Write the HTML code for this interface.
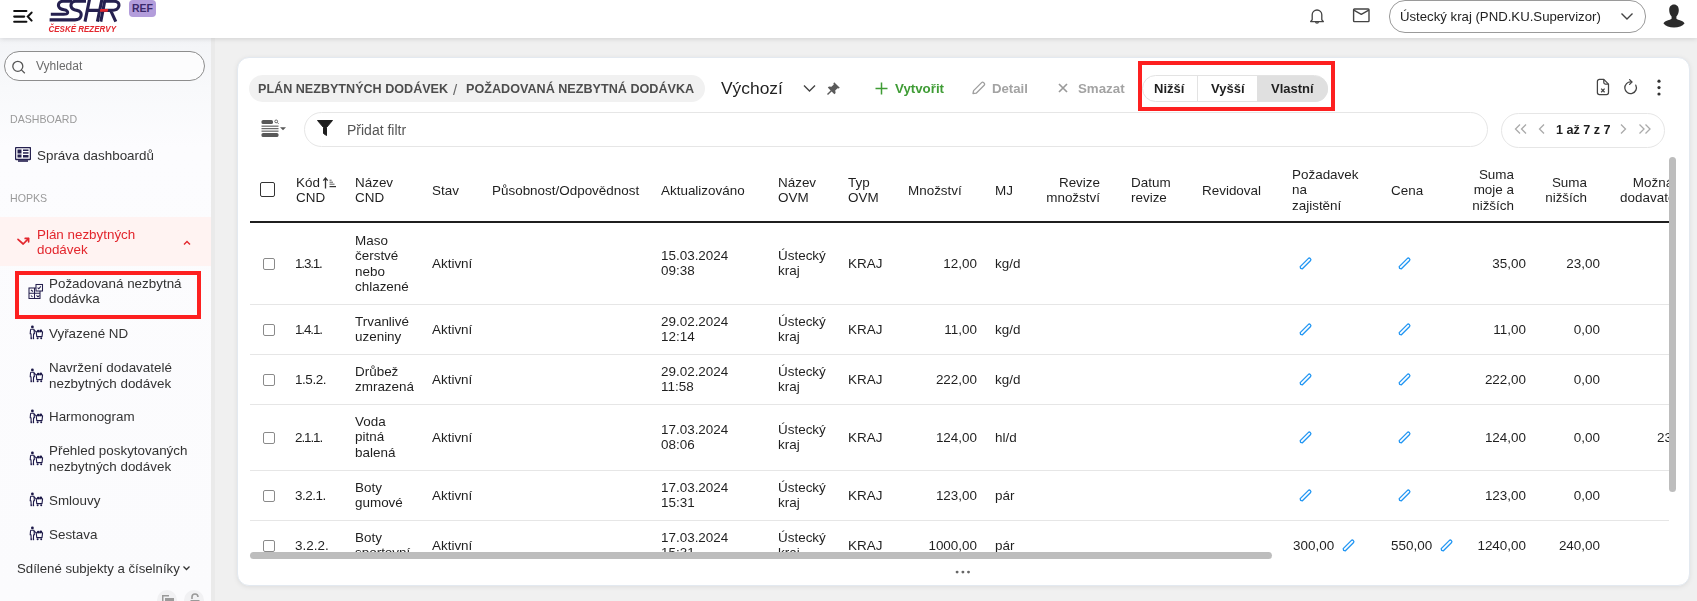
<!DOCTYPE html>
<html><head><meta charset="utf-8">
<style>
*{box-sizing:border-box;margin:0;padding:0}
html,body{width:1697px;height:601px;overflow:hidden;background:#f0f0f0;font-family:"Liberation Sans",sans-serif;color:#1f1f1f;position:relative}
.abs{position:absolute}
.t{position:absolute;white-space:nowrap;will-change:transform}
</style></head>
<body>
<div class="abs" style="left:0px;top:38px;width:211px;height:563px;background:linear-gradient(#f3f4f7 0px,#f8f9fb 50px,#fcfcfe 110px,#fbfbfd 563px);"></div>
<div class="abs" style="left:211px;top:38px;width:4px;height:563px;background:#eaeaea;"></div>
<div class="abs" style="left:236.5px;top:57px;width:1453px;height:528.5px;background:#fff;border:1px solid #e3e9f0;border-radius:12px;box-shadow:0 1px 5px rgba(0,0,0,.08);"></div>
<div class="abs" style="left:0px;top:0px;width:1697px;height:38px;background:#fff;box-shadow:0 1px 5px rgba(0,0,0,.13);z-index:3;"></div>
<svg class="abs" style="left:12px;top:8px;z-index:4;" width="22" height="16" viewBox="0 0 22 16"><g stroke="#111" stroke-width="2.1" stroke-linecap="round" fill="none"><path d="M2.2 3H14.4M2.2 8.6H12.2M2.2 13.8H14.4"/><path d="M19.6 4.6L15.8 8.6L19.6 12.6"/></g></svg>
<svg class="abs" style="left:0px;top:0px;z-index:4;" width="160" height="38" viewBox="0 0 160 38"><g fill="none" stroke="#25204f" stroke-width="3.1" stroke-linecap="butt"><path d="M72 1.3H63C59.6 1.3 58 3.6 58.6 6.1C59.2 8.6 61.6 9.4 64 9.7C66.8 10.1 68 11.6 67.5 13C67 14.2 65.8 14.3 63.5 14.3H50.8"/><path d="M86 1.3H75.5C72 1.3 70.6 3.8 71.1 6.4C71.6 9 74 10 77 10.4C80.6 10.9 81.8 13.6 80.8 16.6C80 18.9 78.2 19.9 75 19.9H49.6"/><path d="M89.8 -2L85 21.6M102.2 -2L97.4 21.6M87.8 10.4H99.8"/><path d="M105.3 -2L100.8 21.6M104.5 1.3H114C118 1.3 119.6 3.6 118.7 6.6C117.8 9.6 115.2 10.4 111.5 10.4H103.2M110.6 10.4L115.8 21.6"/></g><path d="M100.4 9H108.2L107.6 11.8H99.8z" fill="#e3262d"/><text x="48.5" y="32.3" font-family="Liberation Sans" font-weight="700" font-style="italic" font-size="9.3" fill="#e3262d" textLength="67.5" lengthAdjust="spacingAndGlyphs">ČESKÉ REZERVY</text></svg>
<div class="abs" style="left:129px;top:0px;width:27px;height:17px;z-index:4;background:#b39ddb;border-radius:4px;font:700 10.5px/17px 'Liberation Sans',sans-serif;color:#3b2a6b;text-align:center">REF</div>
<svg class="abs" style="left:1308px;top:7px;z-index:4;" width="18" height="18" viewBox="0 0 18 18"><g fill="none" stroke="#444" stroke-width="1.3" stroke-linejoin="round"><path d="M4.2 12.8V7.8a4.8 4.8 0 0 1 9.6 0v5l1.6 1.8H2.6z"/><path d="M7.6 14.8a1.4 1.4 0 0 0 2.8 0"/></g></svg>
<svg class="abs" style="left:1352px;top:7px;z-index:4;" width="19" height="17" viewBox="0 0 19 17"><g fill="none" stroke="#444" stroke-width="1.4" stroke-linejoin="round"><rect x="1.6" y="2" width="15.4" height="12.6" rx="0.8"/><path d="M1.8 3.2L9.3 7.3L16.8 3.2"/></g></svg>
<div class="abs" style="left:1389px;top:0px;width:257px;height:33px;border:1px solid #9a9a9a;border-radius:16px;z-index:4;background:#fff;"></div>
<div class="t" style="top:9.13px;font-size:13.2px;line-height:15.179999999999998px;color:#222;left:1400.00px;z-index:4;">Ústecký kraj (PND.KU.Supervizor)</div>
<svg class="abs" style="left:1619px;top:11px;z-index:4;" width="16" height="10" viewBox="0 0 16 10"><path d="M2.5 2.5L8 8L13.5 2.5" fill="none" stroke="#444" stroke-width="1.4"/></svg>
<svg class="abs" style="left:1662px;top:3px;z-index:4;" width="24" height="26" viewBox="0 0 24 26"><path fill="#2b2b2b" d="M12 1.5C9 1.5 7.2 3.8 7.2 7C7.2 9.6 8.2 12 9.6 13.4V15.6C9.4 16.4 8.6 16.6 6.8 17.1C3.8 17.9 1.8 19.2 1.5 20.5C3.6 23.4 7.4 24.4 12 24.4C16.6 24.4 20.4 23.4 22.5 20.5C22.2 19.2 20.2 17.9 17.2 17.1C15.4 16.6 14.6 16.4 14.4 15.6V13.4C15.8 12 16.8 9.6 16.8 7C16.8 3.8 15 1.5 12 1.5Z"/></svg>
<div class="abs" style="left:4px;top:51px;width:201px;height:30px;border:1px solid #8d8d8d;border-radius:15px;background:#fcfcfd;"></div>
<svg class="abs" style="left:11px;top:60px;" width="16" height="14" viewBox="0 0 16 14"><g fill="none" stroke="#555" stroke-width="1.3"><circle cx="6.8" cy="6.3" r="5"/><path d="M10.4 9.9L13.8 13.2"/></g></svg>
<div class="t" style="top:60.34px;font-size:12px;line-height:13.799999999999999px;color:#6b6b6b;left:36.00px;">Vyhledat</div>
<div class="t" style="top:113.23px;font-size:10.6px;line-height:12.19px;color:#9a9a9a;left:10.00px;">DASHBOARD</div>
<svg class="abs" style="left:15px;top:147px;" width="16" height="15" viewBox="0 0 16 15"><g fill="#25204f"><rect x="0.5" y="0.5" width="15" height="12" rx="1" fill="none" stroke="#25204f" stroke-width="1.4"/><rect x="2.5" y="2.5" width="4" height="4"/><rect x="2.5" y="7.5" width="4" height="3"/><rect x="8" y="2.5" width="5.5" height="1.5"/><rect x="8" y="5.2" width="5.5" height="1.5"/><rect x="8" y="8" width="5.5" height="2.5"/><rect x="3" y="13.2" width="10" height="1.6"/></g></svg>
<div class="t" style="top:147.85px;font-size:13.4px;line-height:15.409999999999998px;color:#333;left:37.00px;">Správa dashboardů</div>
<div class="t" style="top:192.23px;font-size:10.6px;line-height:12.19px;color:#9a9a9a;left:10.00px;">HOPKS</div>
<div class="abs" style="left:0px;top:217px;width:211px;height:49px;background:#fff3f2;"></div>
<svg class="abs" style="left:16px;top:235px;" width="14" height="12" viewBox="0 0 14 12"><g fill="none" stroke="#e3262d" stroke-width="1.7" stroke-linecap="round" stroke-linejoin="round"><path d="M2 4.4L7.2 9L12.4 3.6"/><path d="M9.2 3.4H12.6V6.8"/></g></svg>
<div class="t" style="top:226.65px;font-size:13.4px;line-height:15.409999999999998px;color:#e3262d;left:37.00px;">Plán nezbytných</div>
<div class="t" style="top:241.65px;font-size:13.4px;line-height:15.409999999999998px;color:#e3262d;left:37.00px;">dodávek</div>
<svg class="abs" style="left:182px;top:239px;" width="10" height="7" viewBox="0 0 10 7"><path d="M2 5.5L5 2.5L8 5.5" fill="none" stroke="#e3262d" stroke-width="1.4"/></svg>
<div class="abs" style="left:15px;top:270.7px;width:185.5px;height:48.6px;border:4px solid #fd2020;"></div>
<svg class="abs" style="left:27px;top:283px;" width="17" height="16" viewBox="0 0 17 16"><g fill="none" stroke="#25204f" stroke-width="1.05"><rect x="2" y="5" width="11" height="10.5"/><path d="M2 10.2H13M7.5 5V15.5"/><rect x="9" y="1.5" width="6.5" height="6.5" fill="#fcfcfe"/><path d="M10.6 4.6l1.2 1.2l2-2.4"/><path d="M4 7L6 8.5M4 12.5l1.5 1.5M9.5 12.3l1.5 1.5l1.5-1.5"/></g></svg>
<div class="t" style="top:276.25px;font-size:13.4px;line-height:15.409999999999998px;color:#333;left:49.00px;">Požadovaná nezbytná</div>
<div class="t" style="top:291.05px;font-size:13.4px;line-height:15.409999999999998px;color:#333;left:49.00px;">dodávka</div>
<svg class="abs" style="left:29px;top:325px;" width="15" height="15" viewBox="0 0 15 15"><g fill="#1c1848"><circle cx="3.4" cy="1.9" r="1.4"/></g><g fill="none" stroke="#1c1848" stroke-width="1.1" stroke-linejoin="round"><path d="M1.6 4.3H5L5.4 8.8H4.6L4.4 13.6M1.6 4.3L1.2 8.8H2L2.2 13.6"/><path d="M5 5.2L7.2 6.6"/><path d="M7.2 6.8H13.6L13 11.6H7.8Z"/></g><g fill="#1c1848"><circle cx="9.2" cy="6" r="1.3"/><circle cx="11.8" cy="5.8" r="1.4"/><circle cx="8.6" cy="13.2" r="1"/><circle cx="12.2" cy="13.2" r="1"/><rect x="1.6" y="12.6" width="1.3" height="1.6"/><rect x="3.8" y="12.6" width="1.3" height="1.6"/></g></svg>
<div class="t" style="top:326.15px;font-size:13.4px;line-height:15.409999999999998px;color:#333;left:49.00px;">Vyřazené ND</div>
<svg class="abs" style="left:29px;top:368px;" width="15" height="15" viewBox="0 0 15 15"><g fill="#1c1848"><circle cx="3.4" cy="1.9" r="1.4"/></g><g fill="none" stroke="#1c1848" stroke-width="1.1" stroke-linejoin="round"><path d="M1.6 4.3H5L5.4 8.8H4.6L4.4 13.6M1.6 4.3L1.2 8.8H2L2.2 13.6"/><path d="M5 5.2L7.2 6.6"/><path d="M7.2 6.8H13.6L13 11.6H7.8Z"/></g><g fill="#1c1848"><circle cx="9.2" cy="6" r="1.3"/><circle cx="11.8" cy="5.8" r="1.4"/><circle cx="8.6" cy="13.2" r="1"/><circle cx="12.2" cy="13.2" r="1"/><rect x="1.6" y="12.6" width="1.3" height="1.6"/><rect x="3.8" y="12.6" width="1.3" height="1.6"/></g></svg>
<div class="t" style="top:360.45px;font-size:13.4px;line-height:15.409999999999998px;color:#333;left:49.00px;">Navržení dodavatelé</div>
<div class="t" style="top:375.75px;font-size:13.4px;line-height:15.409999999999998px;color:#333;left:49.00px;">nezbytných dodávek</div>
<svg class="abs" style="left:29px;top:409px;" width="15" height="15" viewBox="0 0 15 15"><g fill="#1c1848"><circle cx="3.4" cy="1.9" r="1.4"/></g><g fill="none" stroke="#1c1848" stroke-width="1.1" stroke-linejoin="round"><path d="M1.6 4.3H5L5.4 8.8H4.6L4.4 13.6M1.6 4.3L1.2 8.8H2L2.2 13.6"/><path d="M5 5.2L7.2 6.6"/><path d="M7.2 6.8H13.6L13 11.6H7.8Z"/></g><g fill="#1c1848"><circle cx="9.2" cy="6" r="1.3"/><circle cx="11.8" cy="5.8" r="1.4"/><circle cx="8.6" cy="13.2" r="1"/><circle cx="12.2" cy="13.2" r="1"/><rect x="1.6" y="12.6" width="1.3" height="1.6"/><rect x="3.8" y="12.6" width="1.3" height="1.6"/></g></svg>
<div class="t" style="top:409.15px;font-size:13.4px;line-height:15.409999999999998px;color:#333;left:49.00px;">Harmonogram</div>
<svg class="abs" style="left:29px;top:451px;" width="15" height="15" viewBox="0 0 15 15"><g fill="#1c1848"><circle cx="3.4" cy="1.9" r="1.4"/></g><g fill="none" stroke="#1c1848" stroke-width="1.1" stroke-linejoin="round"><path d="M1.6 4.3H5L5.4 8.8H4.6L4.4 13.6M1.6 4.3L1.2 8.8H2L2.2 13.6"/><path d="M5 5.2L7.2 6.6"/><path d="M7.2 6.8H13.6L13 11.6H7.8Z"/></g><g fill="#1c1848"><circle cx="9.2" cy="6" r="1.3"/><circle cx="11.8" cy="5.8" r="1.4"/><circle cx="8.6" cy="13.2" r="1"/><circle cx="12.2" cy="13.2" r="1"/><rect x="1.6" y="12.6" width="1.3" height="1.6"/><rect x="3.8" y="12.6" width="1.3" height="1.6"/></g></svg>
<div class="t" style="top:443.45px;font-size:13.4px;line-height:15.409999999999998px;color:#333;left:49.00px;">Přehled poskytovaných</div>
<div class="t" style="top:458.95px;font-size:13.4px;line-height:15.409999999999998px;color:#333;left:49.00px;">nezbytných dodávek</div>
<svg class="abs" style="left:29px;top:492px;" width="15" height="15" viewBox="0 0 15 15"><g fill="#1c1848"><circle cx="3.4" cy="1.9" r="1.4"/></g><g fill="none" stroke="#1c1848" stroke-width="1.1" stroke-linejoin="round"><path d="M1.6 4.3H5L5.4 8.8H4.6L4.4 13.6M1.6 4.3L1.2 8.8H2L2.2 13.6"/><path d="M5 5.2L7.2 6.6"/><path d="M7.2 6.8H13.6L13 11.6H7.8Z"/></g><g fill="#1c1848"><circle cx="9.2" cy="6" r="1.3"/><circle cx="11.8" cy="5.8" r="1.4"/><circle cx="8.6" cy="13.2" r="1"/><circle cx="12.2" cy="13.2" r="1"/><rect x="1.6" y="12.6" width="1.3" height="1.6"/><rect x="3.8" y="12.6" width="1.3" height="1.6"/></g></svg>
<div class="t" style="top:492.95px;font-size:13.4px;line-height:15.409999999999998px;color:#333;left:49.00px;">Smlouvy</div>
<svg class="abs" style="left:29px;top:526px;" width="15" height="15" viewBox="0 0 15 15"><g fill="#1c1848"><circle cx="3.4" cy="1.9" r="1.4"/></g><g fill="none" stroke="#1c1848" stroke-width="1.1" stroke-linejoin="round"><path d="M1.6 4.3H5L5.4 8.8H4.6L4.4 13.6M1.6 4.3L1.2 8.8H2L2.2 13.6"/><path d="M5 5.2L7.2 6.6"/><path d="M7.2 6.8H13.6L13 11.6H7.8Z"/></g><g fill="#1c1848"><circle cx="9.2" cy="6" r="1.3"/><circle cx="11.8" cy="5.8" r="1.4"/><circle cx="8.6" cy="13.2" r="1"/><circle cx="12.2" cy="13.2" r="1"/><rect x="1.6" y="12.6" width="1.3" height="1.6"/><rect x="3.8" y="12.6" width="1.3" height="1.6"/></g></svg>
<div class="t" style="top:526.95px;font-size:13.4px;line-height:15.409999999999998px;color:#333;left:49.00px;">Sestava</div>
<div class="t" style="top:560.83px;font-size:13.2px;line-height:15.179999999999998px;color:#333;left:16.50px;">Sdílené subjekty a číselníky</div>
<svg class="abs" style="left:182px;top:565px;" width="9" height="6" viewBox="0 0 9 6"><path d="M1.5 1.5L4.5 4.5L7.5 1.5" fill="none" stroke="#333" stroke-width="1.3"/></svg>
<div class="abs" style="left:157px;top:590px;width:20px;height:20px;border-radius:10px;background:#f1f1f3;"></div>
<div class="abs" style="left:184px;top:590px;width:20px;height:20px;border-radius:10px;background:#f1f1f3;"></div>
<svg class="abs" style="left:161px;top:593.5px;" width="14" height="9" viewBox="0 0 14 9"><g fill="#9a9a9a"><path d="M1 1h7v1.5H2.5V9H1z"/><rect x="4" y="4" width="9" height="6"/></g></svg>
<svg class="abs" style="left:188px;top:593px;" width="14" height="11" viewBox="0 0 14 11"><g fill="none" stroke="#9a9a9a" stroke-width="1.6"><path d="M4 6V4a3 3 0 0 1 6 0"/></g><rect x="2.5" y="7" width="9" height="5" fill="#9a9a9a"/></svg>
<div class="abs" style="left:249px;top:75px;width:456px;height:27px;background:#f1f1f1;border-radius:13.5px;"></div>
<div class="t" style="top:82.01px;font-size:12.58px;line-height:14.466999999999999px;color:#4d4d4d;font-weight:700;left:258.30px;">PLÁN NEZBYTNÝCH DODÁVEK</div>
<div class="t" style="top:80.67px;font-size:15px;line-height:17.25px;color:#666;left:453.00px;">/</div>
<div class="t" style="top:81.97px;font-size:12.62px;line-height:14.512999999999998px;color:#4d4d4d;font-weight:700;left:465.50px;">POŽADOVANÁ NEZBYTNÁ DODÁVKA</div>
<div class="t" style="top:78.46px;font-size:17.4px;line-height:20.009999999999998px;color:#222;left:721.00px;">Výchozí</div>
<svg class="abs" style="left:802px;top:82px;" width="15" height="12" viewBox="0 0 15 12"><path d="M2 3.5L7.5 9L13 3.5" fill="none" stroke="#444" stroke-width="1.4"/></svg>
<svg class="abs" style="left:826px;top:81px;" width="15" height="15" viewBox="0 0 15 15"><g fill="#5a5a5a"><path d="M8.2 1.2L13.8 6.8L12.6 7.6L11.6 7.2L9.2 9.6L9.6 12L8.4 13.2L5.6 10.4L2 14L1 13L4.6 9.4L1.8 6.6L3 5.4L5.4 5.8L7.8 3.4L7.4 2.4z"/></g></svg>
<svg class="abs" style="left:874px;top:81px;" width="15" height="15" viewBox="0 0 15 15"><path d="M7.5 1.5V13.5M1.5 7.5H13.5" stroke="#3f9c35" stroke-width="1.5"/></svg>
<div class="t" style="top:81.04px;font-size:13.3px;line-height:15.295px;color:#3f9c35;font-weight:700;left:895.40px;">Vytvořit</div>
<svg class="abs" style="left:970px;top:80px;" width="17" height="16" viewBox="0 0 17 16"><path d="M3 13.5L3.6 10.6L11.6 2.6a1.4 1.4 0 0 1 2 0l0.6 0.6a1.4 1.4 0 0 1 0 2L6.2 13.2z" fill="none" stroke="#9e9e9e" stroke-width="1.3" stroke-linejoin="round"/></svg>
<div class="t" style="top:80.73px;font-size:13.2px;line-height:15.179999999999998px;color:#a3a3a3;font-weight:700;left:992.00px;">Detail</div>
<svg class="abs" style="left:1056px;top:81px;" width="14" height="14" viewBox="0 0 14 14"><path d="M3 3L11 11M11 3L3 11" stroke="#9a9a9a" stroke-width="1.7"/></svg>
<div class="t" style="top:80.64px;font-size:13.3px;line-height:15.295px;color:#a3a3a3;font-weight:700;left:1078.00px;">Smazat</div>
<div class="abs" style="left:1138px;top:61px;width:197px;height:50px;border:4px solid #fd2020;"></div>
<div class="abs" style="left:1141.5px;top:75px;width:186.5px;height:27px;border:1px solid #e3e3e3;border-radius:13.5px;background:#fff;overflow:hidden;"></div>
<div class="abs" style="left:1257px;top:75.5px;width:70.5px;height:26px;background:#e0e0e0;border-radius:0 13px 13px 0;"></div>
<div class="abs" style="left:1196.5px;top:76px;width:1px;height:25px;background:#e3e3e3;"></div>
<div class="t" style="top:81.62px;font-size:13px;line-height:14.95px;color:#1f1f1f;font-weight:700;left:1154.00px;">Nižší</div>
<div class="t" style="top:81.62px;font-size:13px;line-height:14.95px;color:#1f1f1f;font-weight:700;left:1210.70px;">Vyšší</div>
<div class="t" style="top:81.62px;font-size:13px;line-height:14.95px;color:#1f1f1f;font-weight:700;left:1271.00px;">Vlastní</div>
<svg class="abs" style="left:1595px;top:78px;" width="16" height="19" viewBox="0 0 16 19"><g fill="none" stroke="#444" stroke-width="1.25" stroke-linejoin="round"><path d="M4.4 1.4H8.8L13.5 6.1V14.6A2 2 0 0 1 11.5 16.6H4.4A2 2 0 0 1 2.4 14.6V3.4A2 2 0 0 1 4.4 1.4z"/><path d="M8.8 1.4V4.6A1.5 1.5 0 0 0 10.3 6.1H13.5"/><path d="M6.2 10.6L9.6 14.2M9.6 10.6L6.2 14.2"/></g></svg>
<svg class="abs" style="left:1622px;top:78px;" width="18" height="19" viewBox="0 0 18 19"><g fill="none" stroke="#444" stroke-width="1.3" stroke-linecap="round"><path d="M13.8 7.2A5.8 5.8 0 1 1 9.2 4"/><path d="M7.6 1.6L10 4L7.6 6.4"/></g></svg>
<svg class="abs" style="left:1654.8px;top:78px;" width="8" height="19" viewBox="0 0 8 19"><g fill="#333"><circle cx="4" cy="3.2" r="1.6"/><circle cx="4" cy="9.6" r="1.6"/><circle cx="4" cy="16" r="1.6"/></g></svg>
<svg class="abs" style="left:259px;top:117px;" width="30" height="22" viewBox="0 0 30 22"><g fill="#585858"><rect x="2.5" y="3" width="11.5" height="4" rx="1.6"/><rect x="2.5" y="8.6" width="17" height="1.1"/><rect x="2.5" y="11.1" width="17" height="1.1"/><rect x="2.5" y="13.6" width="17" height="1.1"/><rect x="2.5" y="16" width="17" height="4" rx="1.6"/><path d="M21 10.3H27L24 13.3z"/></g><g fill="none" stroke="#585858" stroke-width="0.9"><circle cx="17.2" cy="4.4" r="1.4"/><path d="M18.2 5.4L19.6 6.8"/></g></svg>
<div class="abs" style="left:304px;top:112px;width:1184px;height:35px;border:1px solid #e6e6e6;border-radius:17.5px;"></div>
<svg class="abs" style="left:316px;top:119px;" width="18" height="18" viewBox="0 0 18 18"><path d="M1.5 1.5H16.5L10.5 8.5V16.5L7.5 14.5V8.5z" fill="#1f1f1f" stroke="#1f1f1f" stroke-width="1" stroke-linejoin="round"/></svg>
<div class="t" style="top:122.00px;font-size:14px;line-height:16.099999999999998px;color:#555;left:346.70px;">Přidat filtr</div>
<div class="abs" style="left:1501px;top:112.5px;width:164px;height:35px;border:1px solid #e6e6e6;border-radius:17.5px;"></div>
<svg class="abs" style="left:1512px;top:122px;" width="18" height="14" viewBox="0 0 18 14"><g fill="none" stroke="#aaa" stroke-width="1.3"><path d="M8 2.5L3.5 7L8 11.5M14 2.5L9.5 7L14 11.5"/></g></svg>
<svg class="abs" style="left:1535px;top:122px;" width="12" height="14" viewBox="0 0 12 14"><path d="M9 2.5L4.5 7L9 11.5" fill="none" stroke="#aaa" stroke-width="1.3"/></svg>
<div class="t" style="top:123.09px;font-size:12.6px;line-height:14.489999999999998px;color:#1f1f1f;font-weight:700;left:1555.50px;">1 až 7 z 7</div>
<svg class="abs" style="left:1618px;top:122px;" width="12" height="14" viewBox="0 0 12 14"><path d="M3 2.5L7.5 7L3 11.5" fill="none" stroke="#aaa" stroke-width="1.3"/></svg>
<svg class="abs" style="left:1636px;top:122px;" width="18" height="14" viewBox="0 0 18 14"><g fill="none" stroke="#aaa" stroke-width="1.3"><path d="M3.5 2.5L8 7L3.5 11.5M9.5 2.5L14 7L9.5 11.5"/></g></svg>
<div class="abs" style="left:260px;top:182px;width:15px;height:15px;border:1.7px solid #333;border-radius:2px;"></div>
<div class="t" style="top:174.70px;font-size:13.45px;line-height:15.3px;color:#1f1f1f;left:295.80px;">Kód<br>CND</div>
<svg class="abs" style="left:322px;top:176px;" width="16" height="14" viewBox="0 0 16 14"><g stroke="#333" fill="none"><path d="M3.5 2.2V12.6M1.3 4.6L3.5 2.1L5.7 4.6" stroke-width="1.3"/><path d="M7.5 4.2H9.6M7.5 6.2H11M7.5 8.2H12.5" stroke-width="0.8"/><path d="M7.5 10.6H14" stroke-width="1.2"/></g></svg>
<div class="t" style="top:174.70px;font-size:13.45px;line-height:15.3px;color:#1f1f1f;left:354.60px;">Název<br>CND</div>
<div class="t" style="top:182.95px;font-size:13.45px;line-height:15.3px;color:#1f1f1f;left:432.30px;">Stav</div>
<div class="t" style="top:182.95px;font-size:13.45px;line-height:15.3px;color:#1f1f1f;left:491.70px;">Působnost/Odpovědnost</div>
<div class="t" style="top:182.95px;font-size:13.45px;line-height:15.3px;color:#1f1f1f;left:660.60px;">Aktualizováno</div>
<div class="t" style="top:174.70px;font-size:13.45px;line-height:15.3px;color:#1f1f1f;left:777.80px;">Název<br>OVM</div>
<div class="t" style="top:174.70px;font-size:13.45px;line-height:15.3px;color:#1f1f1f;left:847.90px;">Typ<br>OVM</div>
<div class="t" style="top:182.95px;font-size:13.45px;line-height:15.3px;color:#1f1f1f;left:908.30px;">Množství</div>
<div class="t" style="top:182.95px;font-size:13.45px;line-height:15.3px;color:#1f1f1f;left:994.90px;">MJ</div>
<div class="t" style="top:174.70px;font-size:13.45px;line-height:15.3px;color:#1f1f1f;left:500.40px;width:600px;text-align:right;">Revize<br>množství</div>
<div class="t" style="top:174.70px;font-size:13.45px;line-height:15.3px;color:#1f1f1f;left:1130.80px;">Datum<br>revize</div>
<div class="t" style="top:182.95px;font-size:13.45px;line-height:15.3px;color:#1f1f1f;left:1202.30px;">Revidoval</div>
<div class="t" style="top:167.05px;font-size:13.45px;line-height:15.3px;color:#1f1f1f;left:1292.30px;">Požadavek<br>na<br>zajistění</div>
<div class="t" style="top:182.95px;font-size:13.45px;line-height:15.3px;color:#1f1f1f;left:1391.00px;">Cena</div>
<div class="t" style="top:167.05px;font-size:13.45px;line-height:15.3px;color:#1f1f1f;left:914.00px;width:600px;text-align:right;">Suma<br>moje a<br>nižších</div>
<div class="t" style="top:174.70px;font-size:13.45px;line-height:15.3px;color:#1f1f1f;left:987.10px;width:600px;text-align:right;">Suma<br>nižších</div>
<div class="abs" style="left:1600px;top:150px;width:69px;height:70px;overflow:hidden">
<div class="t" style="top:24.70px;font-size:13.45px;line-height:15.3px;color:#1f1f1f;left:-247.50px;width:600px;text-align:center;">Možná<br>dodavatelé</div>
</div>
<div class="abs" style="left:250px;top:221px;width:1419px;height:2px;background:#1f1f1f;"></div>
<div class="abs" style="left:0;top:0;width:1669px;height:552px;overflow:hidden">
<div class="abs" style="left:263px;top:257.8px;width:12px;height:12px;border:1px solid #8a8a8a;border-radius:2px;"></div>
<div class="t" style="top:256.15px;font-size:13.45px;line-height:15.3px;color:#1f1f1f;left:295.10px;letter-spacing:-1.16px;">1.3.1.</div>
<div class="t" style="top:232.60px;font-size:13.45px;line-height:15.3px;color:#1f1f1f;left:354.60px;">Maso<br>čerstvé<br>nebo<br>chlazené</div>
<div class="t" style="top:256.15px;font-size:13.45px;line-height:15.3px;color:#1f1f1f;left:432.30px;">Aktivní</div>
<div class="t" style="top:247.90px;font-size:13.45px;line-height:15.3px;color:#1f1f1f;left:660.60px;">15.03.2024<br>09:38</div>
<div class="t" style="top:247.90px;font-size:13.45px;line-height:15.3px;color:#1f1f1f;left:777.80px;">Ústecký<br>kraj</div>
<div class="t" style="top:256.15px;font-size:13.45px;line-height:15.3px;color:#1f1f1f;left:847.90px;">KRAJ</div>
<div class="t" style="top:256.15px;font-size:13.45px;line-height:15.3px;color:#1f1f1f;left:377.30px;width:600px;text-align:right;">12,00</div>
<div class="t" style="top:256.15px;font-size:13.45px;line-height:15.3px;color:#1f1f1f;left:994.90px;">kg/d</div>
<svg class="abs" style="left:1298px;top:256.3px;" width="15" height="15" viewBox="0 0 15 15"><path d="M2.6 12.4L2.2 10.6L10.2 2.6a1.5 1.5 0 0 1 2.2 2.2L4.4 12.8z" fill="none" stroke="#2196f3" stroke-width="1.3" stroke-linejoin="round"/></svg>
<svg class="abs" style="left:1397px;top:256.3px;" width="15" height="15" viewBox="0 0 15 15"><path d="M2.6 12.4L2.2 10.6L10.2 2.6a1.5 1.5 0 0 1 2.2 2.2L4.4 12.8z" fill="none" stroke="#2196f3" stroke-width="1.3" stroke-linejoin="round"/></svg>
<div class="t" style="top:256.15px;font-size:13.45px;line-height:15.3px;color:#1f1f1f;left:926.40px;width:600px;text-align:right;">35,00</div>
<div class="t" style="top:256.15px;font-size:13.45px;line-height:15.3px;color:#1f1f1f;left:999.60px;width:600px;text-align:right;">23,00</div>
<div class="abs" style="left:250px;top:303.5px;width:1419px;height:1px;background:#e6e6e6;"></div>
<div class="abs" style="left:263px;top:323.8px;width:12px;height:12px;border:1px solid #8a8a8a;border-radius:2px;"></div>
<div class="t" style="top:322.15px;font-size:13.45px;line-height:15.3px;color:#1f1f1f;left:295.10px;letter-spacing:-1.12px;">1.4.1.</div>
<div class="t" style="top:313.90px;font-size:13.45px;line-height:15.3px;color:#1f1f1f;left:354.60px;">Trvanlivé<br>uzeniny</div>
<div class="t" style="top:322.15px;font-size:13.45px;line-height:15.3px;color:#1f1f1f;left:432.30px;">Aktivní</div>
<div class="t" style="top:313.90px;font-size:13.45px;line-height:15.3px;color:#1f1f1f;left:660.60px;">29.02.2024<br>12:14</div>
<div class="t" style="top:313.90px;font-size:13.45px;line-height:15.3px;color:#1f1f1f;left:777.80px;">Ústecký<br>kraj</div>
<div class="t" style="top:322.15px;font-size:13.45px;line-height:15.3px;color:#1f1f1f;left:847.90px;">KRAJ</div>
<div class="t" style="top:322.15px;font-size:13.45px;line-height:15.3px;color:#1f1f1f;left:377.30px;width:600px;text-align:right;">11,00</div>
<div class="t" style="top:322.15px;font-size:13.45px;line-height:15.3px;color:#1f1f1f;left:994.90px;">kg/d</div>
<svg class="abs" style="left:1298px;top:322.3px;" width="15" height="15" viewBox="0 0 15 15"><path d="M2.6 12.4L2.2 10.6L10.2 2.6a1.5 1.5 0 0 1 2.2 2.2L4.4 12.8z" fill="none" stroke="#2196f3" stroke-width="1.3" stroke-linejoin="round"/></svg>
<svg class="abs" style="left:1397px;top:322.3px;" width="15" height="15" viewBox="0 0 15 15"><path d="M2.6 12.4L2.2 10.6L10.2 2.6a1.5 1.5 0 0 1 2.2 2.2L4.4 12.8z" fill="none" stroke="#2196f3" stroke-width="1.3" stroke-linejoin="round"/></svg>
<div class="t" style="top:322.15px;font-size:13.45px;line-height:15.3px;color:#1f1f1f;left:926.40px;width:600px;text-align:right;">11,00</div>
<div class="t" style="top:322.15px;font-size:13.45px;line-height:15.3px;color:#1f1f1f;left:999.60px;width:600px;text-align:right;">0,00</div>
<div class="abs" style="left:250px;top:353.5px;width:1419px;height:1px;background:#e6e6e6;"></div>
<div class="abs" style="left:263px;top:373.8px;width:12px;height:12px;border:1px solid #8a8a8a;border-radius:2px;"></div>
<div class="t" style="top:372.15px;font-size:13.45px;line-height:15.3px;color:#1f1f1f;left:295.10px;letter-spacing:-0.42px;">1.5.2.</div>
<div class="t" style="top:363.90px;font-size:13.45px;line-height:15.3px;color:#1f1f1f;left:354.60px;">Drůbež<br>zmrazená</div>
<div class="t" style="top:372.15px;font-size:13.45px;line-height:15.3px;color:#1f1f1f;left:432.30px;">Aktivní</div>
<div class="t" style="top:363.90px;font-size:13.45px;line-height:15.3px;color:#1f1f1f;left:660.60px;">29.02.2024<br>11:58</div>
<div class="t" style="top:363.90px;font-size:13.45px;line-height:15.3px;color:#1f1f1f;left:777.80px;">Ústecký<br>kraj</div>
<div class="t" style="top:372.15px;font-size:13.45px;line-height:15.3px;color:#1f1f1f;left:847.90px;">KRAJ</div>
<div class="t" style="top:372.15px;font-size:13.45px;line-height:15.3px;color:#1f1f1f;left:377.30px;width:600px;text-align:right;">222,00</div>
<div class="t" style="top:372.15px;font-size:13.45px;line-height:15.3px;color:#1f1f1f;left:994.90px;">kg/d</div>
<svg class="abs" style="left:1298px;top:372.3px;" width="15" height="15" viewBox="0 0 15 15"><path d="M2.6 12.4L2.2 10.6L10.2 2.6a1.5 1.5 0 0 1 2.2 2.2L4.4 12.8z" fill="none" stroke="#2196f3" stroke-width="1.3" stroke-linejoin="round"/></svg>
<svg class="abs" style="left:1397px;top:372.3px;" width="15" height="15" viewBox="0 0 15 15"><path d="M2.6 12.4L2.2 10.6L10.2 2.6a1.5 1.5 0 0 1 2.2 2.2L4.4 12.8z" fill="none" stroke="#2196f3" stroke-width="1.3" stroke-linejoin="round"/></svg>
<div class="t" style="top:372.15px;font-size:13.45px;line-height:15.3px;color:#1f1f1f;left:926.40px;width:600px;text-align:right;">222,00</div>
<div class="t" style="top:372.15px;font-size:13.45px;line-height:15.3px;color:#1f1f1f;left:999.60px;width:600px;text-align:right;">0,00</div>
<div class="abs" style="left:250px;top:403.5px;width:1419px;height:1px;background:#e6e6e6;"></div>
<div class="abs" style="left:263px;top:431.8px;width:12px;height:12px;border:1px solid #8a8a8a;border-radius:2px;"></div>
<div class="t" style="top:430.15px;font-size:13.45px;line-height:15.3px;color:#1f1f1f;left:295.10px;letter-spacing:-1.08px;">2.1.1.</div>
<div class="t" style="top:414.25px;font-size:13.45px;line-height:15.3px;color:#1f1f1f;left:354.60px;">Voda<br>pitná<br>balená</div>
<div class="t" style="top:430.15px;font-size:13.45px;line-height:15.3px;color:#1f1f1f;left:432.30px;">Aktivní</div>
<div class="t" style="top:421.90px;font-size:13.45px;line-height:15.3px;color:#1f1f1f;left:660.60px;">17.03.2024<br>08:06</div>
<div class="t" style="top:421.90px;font-size:13.45px;line-height:15.3px;color:#1f1f1f;left:777.80px;">Ústecký<br>kraj</div>
<div class="t" style="top:430.15px;font-size:13.45px;line-height:15.3px;color:#1f1f1f;left:847.90px;">KRAJ</div>
<div class="t" style="top:430.15px;font-size:13.45px;line-height:15.3px;color:#1f1f1f;left:377.30px;width:600px;text-align:right;">124,00</div>
<div class="t" style="top:430.15px;font-size:13.45px;line-height:15.3px;color:#1f1f1f;left:994.90px;">hl/d</div>
<svg class="abs" style="left:1298px;top:430.3px;" width="15" height="15" viewBox="0 0 15 15"><path d="M2.6 12.4L2.2 10.6L10.2 2.6a1.5 1.5 0 0 1 2.2 2.2L4.4 12.8z" fill="none" stroke="#2196f3" stroke-width="1.3" stroke-linejoin="round"/></svg>
<svg class="abs" style="left:1397px;top:430.3px;" width="15" height="15" viewBox="0 0 15 15"><path d="M2.6 12.4L2.2 10.6L10.2 2.6a1.5 1.5 0 0 1 2.2 2.2L4.4 12.8z" fill="none" stroke="#2196f3" stroke-width="1.3" stroke-linejoin="round"/></svg>
<div class="t" style="top:430.15px;font-size:13.45px;line-height:15.3px;color:#1f1f1f;left:926.40px;width:600px;text-align:right;">124,00</div>
<div class="t" style="top:430.15px;font-size:13.45px;line-height:15.3px;color:#1f1f1f;left:999.60px;width:600px;text-align:right;">0,00</div>
<div class="t" style="top:430.15px;font-size:13.45px;line-height:15.3px;color:#1f1f1f;left:1656.70px;">23</div>
<div class="abs" style="left:250px;top:469.5px;width:1419px;height:1px;background:#e6e6e6;"></div>
<div class="abs" style="left:263px;top:489.8px;width:12px;height:12px;border:1px solid #8a8a8a;border-radius:2px;"></div>
<div class="t" style="top:488.15px;font-size:13.45px;line-height:15.3px;color:#1f1f1f;left:295.10px;letter-spacing:-0.48px;">3.2.1.</div>
<div class="t" style="top:479.90px;font-size:13.45px;line-height:15.3px;color:#1f1f1f;left:354.60px;">Boty<br>gumové</div>
<div class="t" style="top:488.15px;font-size:13.45px;line-height:15.3px;color:#1f1f1f;left:432.30px;">Aktivní</div>
<div class="t" style="top:479.90px;font-size:13.45px;line-height:15.3px;color:#1f1f1f;left:660.60px;">17.03.2024<br>15:31</div>
<div class="t" style="top:479.90px;font-size:13.45px;line-height:15.3px;color:#1f1f1f;left:777.80px;">Ústecký<br>kraj</div>
<div class="t" style="top:488.15px;font-size:13.45px;line-height:15.3px;color:#1f1f1f;left:847.90px;">KRAJ</div>
<div class="t" style="top:488.15px;font-size:13.45px;line-height:15.3px;color:#1f1f1f;left:377.30px;width:600px;text-align:right;">123,00</div>
<div class="t" style="top:488.15px;font-size:13.45px;line-height:15.3px;color:#1f1f1f;left:994.90px;">pár</div>
<svg class="abs" style="left:1298px;top:488.3px;" width="15" height="15" viewBox="0 0 15 15"><path d="M2.6 12.4L2.2 10.6L10.2 2.6a1.5 1.5 0 0 1 2.2 2.2L4.4 12.8z" fill="none" stroke="#2196f3" stroke-width="1.3" stroke-linejoin="round"/></svg>
<svg class="abs" style="left:1397px;top:488.3px;" width="15" height="15" viewBox="0 0 15 15"><path d="M2.6 12.4L2.2 10.6L10.2 2.6a1.5 1.5 0 0 1 2.2 2.2L4.4 12.8z" fill="none" stroke="#2196f3" stroke-width="1.3" stroke-linejoin="round"/></svg>
<div class="t" style="top:488.15px;font-size:13.45px;line-height:15.3px;color:#1f1f1f;left:926.40px;width:600px;text-align:right;">123,00</div>
<div class="t" style="top:488.15px;font-size:13.45px;line-height:15.3px;color:#1f1f1f;left:999.60px;width:600px;text-align:right;">0,00</div>
<div class="abs" style="left:250px;top:519.5px;width:1419px;height:1px;background:#e6e6e6;"></div>
<div class="abs" style="left:263px;top:539.8px;width:12px;height:12px;border:1px solid #8a8a8a;border-radius:2px;"></div>
<div class="t" style="top:538.15px;font-size:13.45px;line-height:15.3px;color:#1f1f1f;left:295.10px;letter-spacing:0px;">3.2.2.</div>
<div class="t" style="top:529.90px;font-size:13.45px;line-height:15.3px;color:#1f1f1f;left:354.60px;">Boty<br>sportovní</div>
<div class="t" style="top:538.15px;font-size:13.45px;line-height:15.3px;color:#1f1f1f;left:432.30px;">Aktivní</div>
<div class="t" style="top:529.90px;font-size:13.45px;line-height:15.3px;color:#1f1f1f;left:660.60px;">17.03.2024<br>15:31</div>
<div class="t" style="top:529.90px;font-size:13.45px;line-height:15.3px;color:#1f1f1f;left:777.80px;">Ústecký<br>kraj</div>
<div class="t" style="top:538.15px;font-size:13.45px;line-height:15.3px;color:#1f1f1f;left:847.90px;">KRAJ</div>
<div class="t" style="top:538.15px;font-size:13.45px;line-height:15.3px;color:#1f1f1f;left:377.30px;width:600px;text-align:right;">1000,00</div>
<div class="t" style="top:538.15px;font-size:13.45px;line-height:15.3px;color:#1f1f1f;left:994.90px;">pár</div>
<div class="t" style="top:538.15px;font-size:13.45px;line-height:15.3px;color:#1f1f1f;left:1292.90px;">300,00</div>
<svg class="abs" style="left:1341px;top:537.8px;" width="15" height="15" viewBox="0 0 15 15"><path d="M2.6 12.4L2.2 10.6L10.2 2.6a1.5 1.5 0 0 1 2.2 2.2L4.4 12.8z" fill="none" stroke="#2196f3" stroke-width="1.3" stroke-linejoin="round"/></svg>
<div class="t" style="top:538.15px;font-size:13.45px;line-height:15.3px;color:#1f1f1f;left:1390.80px;">550,00</div>
<svg class="abs" style="left:1439px;top:537.8px;" width="15" height="15" viewBox="0 0 15 15"><path d="M2.6 12.4L2.2 10.6L10.2 2.6a1.5 1.5 0 0 1 2.2 2.2L4.4 12.8z" fill="none" stroke="#2196f3" stroke-width="1.3" stroke-linejoin="round"/></svg>
<div class="t" style="top:538.15px;font-size:13.45px;line-height:15.3px;color:#1f1f1f;left:926.40px;width:600px;text-align:right;">1240,00</div>
<div class="t" style="top:538.15px;font-size:13.45px;line-height:15.3px;color:#1f1f1f;left:999.60px;width:600px;text-align:right;">240,00</div>
</div>
<div class="abs" style="left:1669px;top:156.5px;width:7px;height:335px;background:#bdbdbd;border-radius:3.5px;"></div>
<div class="abs" style="left:250px;top:551.5px;width:1022px;height:7px;background:#bdbdbd;border-radius:3.5px;"></div>
<svg class="abs" style="left:953px;top:569px;" width="20" height="6" viewBox="0 0 20 6"><g fill="#666"><circle cx="4.1" cy="3.1" r="1.45"/><circle cx="9.9" cy="3.1" r="1.45"/><circle cx="15.5" cy="3.1" r="1.45"/></g></svg>
</body></html>
